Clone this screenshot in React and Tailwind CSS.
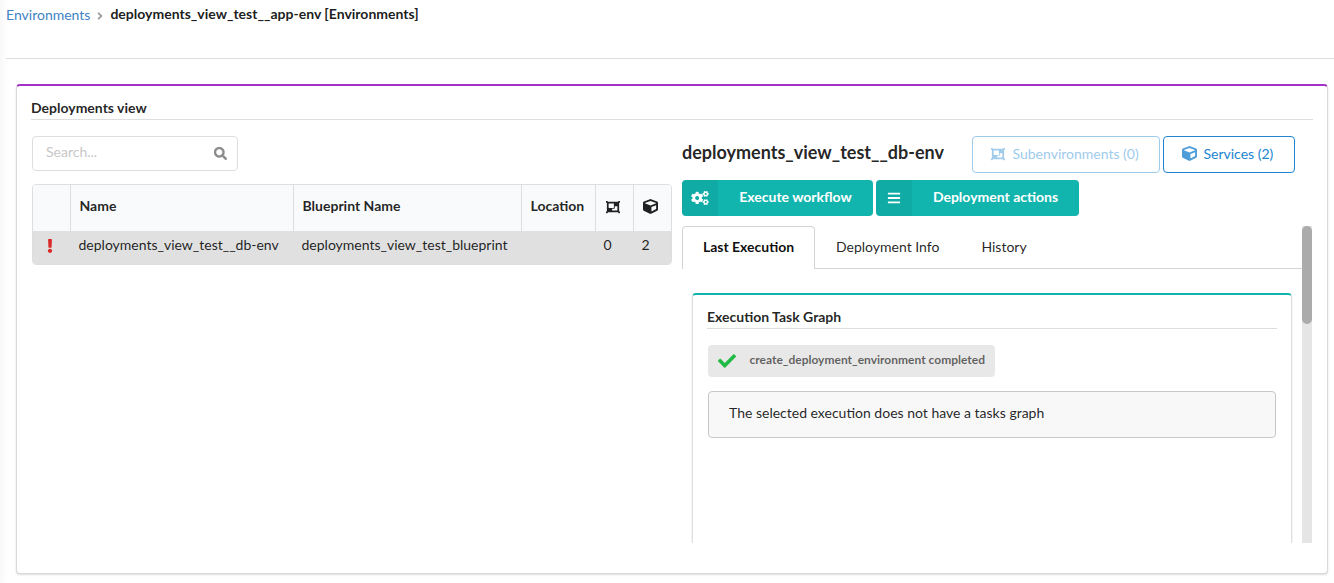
import React from 'react';
import { FaSearch, FaExclamation, FaObjectGroup, FaCube, FaCogs, FaBars, FaCheck, FaAngleRight } from 'react-icons/fa';

const columns = ['Name', 'Blueprint Name', 'Location'];

function Breadcrumb() {
  return (
    <nav className="flex h-[28px] items-center whitespace-nowrap">
      <a className="mt-[2px] text-[#4183c4]">Environments</a>
      <FaAngleRight className="mt-[4px] mr-[4px] ml-[4px] size-[12px] text-[#a0a0a0]" />
      <span className="font-bold text-black/90">deployments_view_test__app-env [Environments]</span>
    </nav>
  );
}

function DeploymentsTable() {
  return (
    <div className="mt-[13px] w-[640px] overflow-hidden rounded-[4px] border border-[#dededf] text-black/[.87]">
      <div className="grid h-[46px] grid-cols-[37px_223px_228px_74px_38px_38px] bg-[#f9fafb] font-bold">
        <div />
        {columns.map((name) => (
          <div key={name} className="flex items-center border-l border-[#dededf] pb-[4px] pl-[8.5px] whitespace-nowrap">
            {name}
          </div>
        ))}
        <div className="flex items-center justify-center border-l border-[#dededf] pr-[4px] pb-[2px]">
          <FaObjectGroup className="size-[14px]" />
        </div>
        <div className="flex items-center justify-center border-l border-[#dededf] pr-[4px] pb-[3px]">
          <FaCube className="size-[15px]" />
        </div>
      </div>
      <div className="grid h-[33px] grid-cols-[37px_223px_228px_74px_38px_38px] bg-[#e0e0e0] whitespace-nowrap">
        <div className="flex items-center justify-center pr-[4px] pb-[4px]">
          <FaExclamation className="size-[14px] text-[#db2828]" />
        </div>
        <div className="flex items-center pb-[6px] pl-[8.5px]">deployments_view_test__db-env</div>
        <div className="flex items-center pb-[6px] pl-[8.5px]">deployments_view_test_blueprint</div>
        <div />
        <div className="flex items-center pb-[6px] pl-[8.5px]">0</div>
        <div className="flex items-center pb-[6px] pl-[8.5px]">2</div>
      </div>
    </div>
  );
}

function Master() {
  return (
    <section className="w-[640px]">
      <div className="flex h-[35px] w-[206px] items-center justify-between rounded-[4px] border border-[#dededf] pr-[10px] pl-[13px]">
        <span className="pb-[3px] text-[#c7c7c7]">Search...</span>
        <FaSearch className="size-[13px] stroke-[#8a8a8a] stroke-[14px] text-[#8a8a8a]" />
      </div>
      <DeploymentsTable />
    </section>
  );
}

function ActionButton({ icon: Icon, iconClass, label, className }) {
  return (
    <button className={`flex h-[36px] overflow-hidden rounded-[4px] bg-[#12b5ae] font-bold text-white ${className}`}>
      <span className="flex h-full w-[36px] items-center justify-center bg-black/5">
        <Icon className={iconClass} />
      </span>
      <span className="flex h-full flex-1 items-center justify-center pb-[2px]">{label}</span>
    </button>
  );
}

function TaskGraph() {
  return (
    <div className="mx-[10px] mt-[24px] h-[300px] rounded-[4px] border border-t-2 border-[#dededf] border-t-[#12b5ae] px-[14px] shadow-[0_1px_2px_0_rgba(34,36,38,0.15)]">
      <h3 className="h-[34px] border-b border-[#dededf] pt-[12px] font-bold">Execution Task Graph</h3>
      <div className="mt-[16px] ml-px flex h-[32px] w-[287px] items-center rounded-[4px] bg-[#e8e8e8] pl-[9.5px] text-[12px] font-bold text-black/60">
        <FaCheck className="size-[18px] text-[#21ba45]" />
        <span className="ml-[14px] pb-[2px]">create_deployment_environment completed</span>
      </div>
      <div className="mx-px mt-[14px] flex h-[47px] items-center rounded-[4px] border border-[#c8c8c8] bg-[#f8f8f9] pb-[3px] pl-[20px]">
        The selected execution does not have a tasks graph
      </div>
    </div>
  );
}

function Details() {
  return (
    <section className="ml-[10px] w-[630px]">
      <div className="flex h-[37px] items-center">
        <h2 className="w-[290px] pb-[5px] text-[18px] font-bold whitespace-nowrap">deployments_view_test__db-env</h2>
        <button className="flex h-[37px] w-[188px] items-center rounded-[4px] border border-[#9dcbec] pl-[18px] text-[#a0cbeb]">
          <FaObjectGroup className="mb-[2px] size-[14px] shrink-0" />
          <span className="ml-[7.5px] pb-[2px]">Subenvironments (0)</span>
        </button>
        <button className="ml-[3px] flex h-[37px] w-[132px] items-center rounded-[4px] border border-[#2185d0] pl-[18px] text-[#2185d0]">
          <FaCube className="mb-[2px] size-[15px] shrink-0 opacity-80" />
          <span className="ml-[6.5px] pb-[2px]">Services (2)</span>
        </button>
      </div>
      <div className="mt-[7px] flex gap-[3px]">
        <ActionButton icon={FaCogs} iconClass="h-[14px] w-[18px]" label="Execute workflow" className="w-[191px]" />
        <ActionButton icon={FaBars} iconClass="size-[14px]" label="Deployment actions" className="w-[203px]" />
      </div>
      <div className="mt-[10px] flex h-[317px] overflow-hidden">
        <div className="w-[620px]">
          <div className="flex h-[43px] whitespace-nowrap">
            <div className="flex w-[133px] items-center justify-center rounded-t-[4px] border border-b-0 border-[#d4d4d5] pb-[2px] font-bold text-black/95">
              Last Execution
            </div>
            <div className="flex flex-1 items-center border-b border-[#d4d4d5] pl-[21px]">
              <span>Deployment Info</span>
              <span className="ml-[42px]">History</span>
            </div>
          </div>
          <TaskGraph />
        </div>
        <div className="w-[10px] bg-[#e5e5e5]">
          <div className="h-[98px] rounded-[5px] bg-[#ababab]" />
        </div>
      </div>
    </section>
  );
}

export default function App() {
  return (
    <div className="h-[583px] w-[1334px] overflow-hidden bg-[linear-gradient(to_right,#f8f8f8,#fefefe_6px,#ffffff_10px)] pl-[6px] font-['Lato',sans-serif] text-[14px] leading-[20px] text-black/[.87]">
      <header className="h-[59px] border-b border-[#dededf]">
        <Breadcrumb />
      </header>
      <main className="mt-[25px] ml-[10px] h-[490px] w-[1312px] rounded-[4px] border border-t-2 border-[#d9d9da] border-t-[#a333c8] bg-white px-[14px] shadow-[0_1px_2px_0_rgba(34,36,38,0.15)]">
        <h1 className="h-[34px] border-b border-[#dededf] pt-[12px] font-bold">Deployments view</h1>
        <div className="ml-px mt-[16px] flex">
          <Master />
          <Details />
        </div>
      </main>
    </div>
  );
}
